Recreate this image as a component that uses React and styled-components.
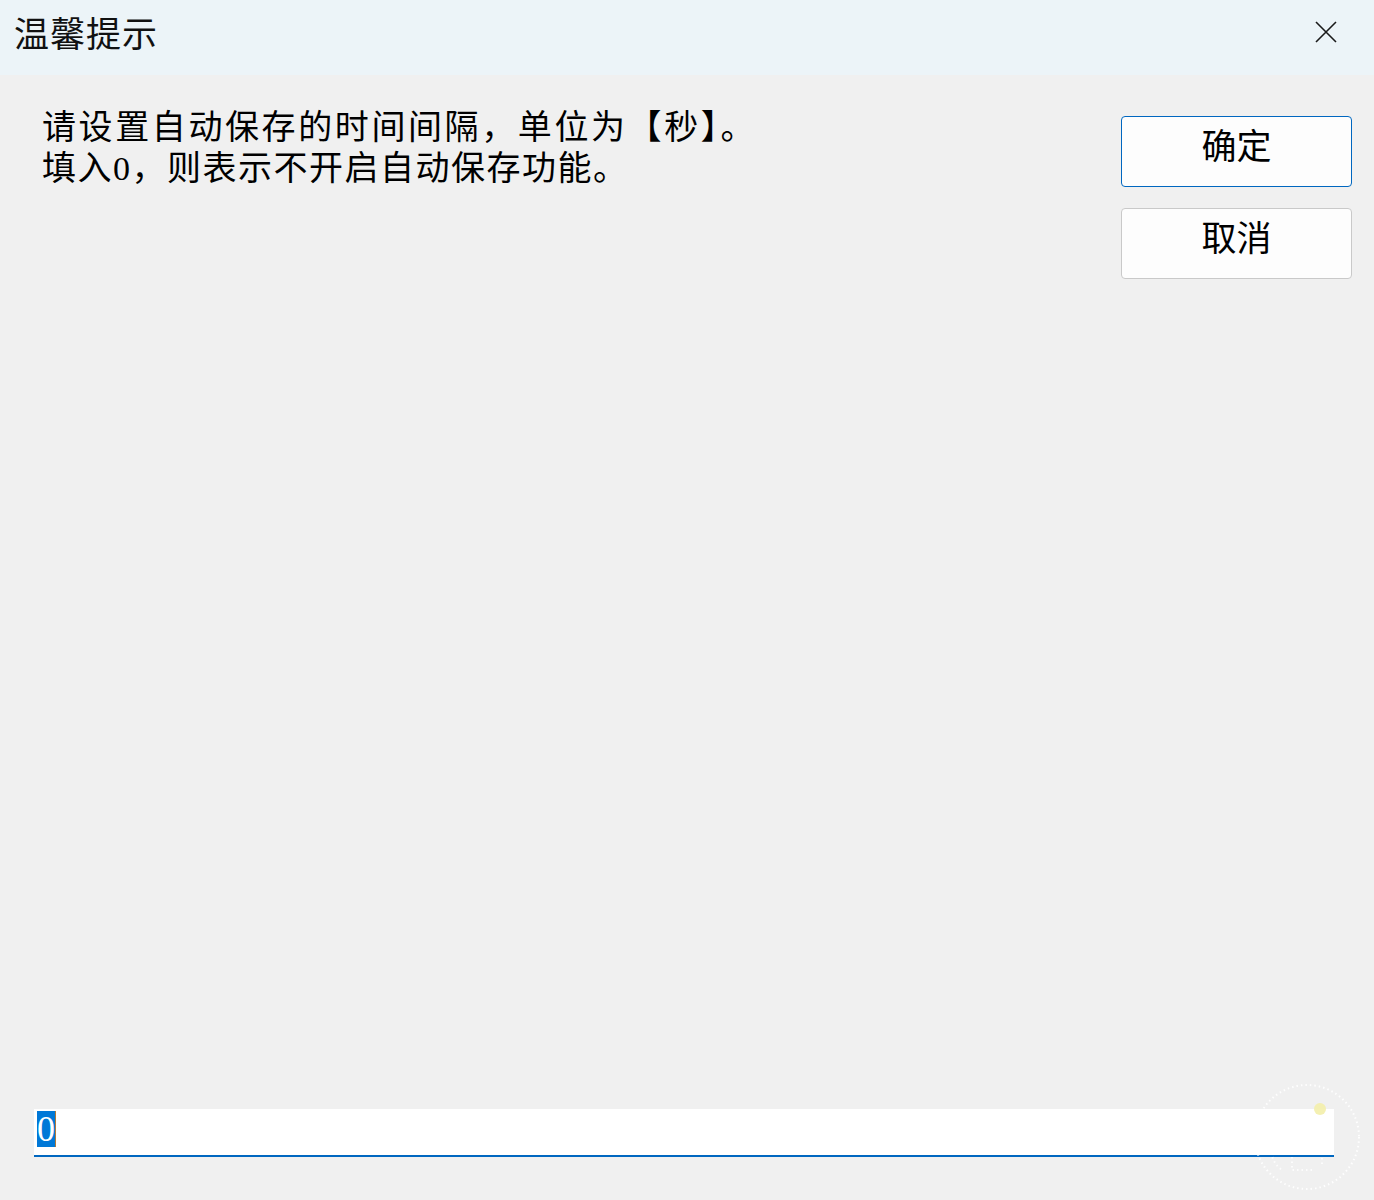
import React from "react";
import styled, { createGlobalStyle } from "styled-components";

const GlobalStyle = createGlobalStyle`
  html, body {
    margin: 0;
    padding: 0;
    background: #f0f0f0;
  }
  * {
    box-sizing: border-box;
  }
`;

const App = () => {
  return (
    <>
      <GlobalStyle />
      <Window>
        <TitleBar>
          <Title>温馨提示</Title>
          <CloseButton aria-label="关闭">
            <svg width="22" height="22" viewBox="0 0 22 22">
              <path
                d="M1 1 L21 21 M21 1 L1 21"
                stroke="#1a1a1a"
                strokeWidth="1.6"
                fill="none"
              />
            </svg>
          </CloseButton>
        </TitleBar>

        <Body>
          <Message>
            <Line spacing={2.6}>请设置自动保存的时间间隔，单位为【秒】。</Line>
            <Line spacing={1.5}>填入0，则表示不开启自动保存功能。</Line>
          </Message>
          <Actions>
            <DialogButton primary>确定</DialogButton>
            <DialogButton>取消</DialogButton>
          </Actions>
        </Body>

        <InputRow>
          <TextBox>
            <Selected>0</Selected>
            <Caret />
          </TextBox>
          <Watermark viewBox="0 0 110 110" width="110" height="110">
            <circle
              cx="55"
              cy="55"
              r="52"
              fill="none"
              stroke="#ffffff"
              strokeWidth="2"
              strokeDasharray="1.5 3"
              opacity="0.9"
            />
            <path
              d="M30 30 H52 M40 30 V88 H60 M22 40 C14 60 18 80 30 88 M70 40 V84 M60 42 H80"
              fill="none"
              stroke="#ffffff"
              strokeWidth="2"
              strokeDasharray="1.5 3"
              opacity="0.8"
            />
            <circle cx="68" cy="27" r="6" fill="#f3eeaa" opacity="0.9" />
          </Watermark>
        </InputRow>
      </Window>
    </>
  );
};

export default App;

const Window = styled.div`
  display: flex;
  flex-direction: column;
  min-height: 100vh;
  background: #f0f0f0;
  font-family: "Liberation Serif", "Noto Sans CJK SC", serif;
  color: #000;
`;

const TitleBar = styled.div`
  display: flex;
  align-items: center;
  justify-content: space-between;
  height: 75px;
  padding: 0 36px 0 14px;
  background: #ecf4f8;
`;

const Title = styled.h1`
  margin: 0;
  margin-top: -12px;
  font-family: "Noto Sans CJK SC", "Noto Sans", sans-serif;
  font-weight: 400;
  font-size: 35px;
  letter-spacing: 1px;
  color: #111;
`;

const CloseButton = styled.button`
  display: flex;
  align-items: center;
  justify-content: center;
  width: 24px;
  height: 24px;
  margin-top: -12px;
  padding: 0;
  border: none;
  background: transparent;
`;

const Body = styled.div`
  display: flex;
  flex: 1;
  justify-content: space-between;
  padding: 41px 22px 0 42px;
`;

const Message = styled.div`
  display: flex;
  flex-direction: column;
  margin-top: -9px;
  font-size: 34px;
  line-height: 41px;
`;

const Line = styled.div`
  white-space: nowrap;
  letter-spacing: ${(p) => p.spacing || 0}px;
`;

const Actions = styled.div`
  display: flex;
  flex-direction: column;
  gap: 21px;
  width: 231px;
`;

const DialogButton = styled.button`
  height: 71px;
  border: 1px solid ${(p) => (p.primary ? "#0067c0" : "#c9c9c9")};
  border-radius: 4px;
  background: #fdfdfd;
  font-family: "Liberation Serif", "Noto Sans CJK SC", serif;
  font-size: 35px;
  color: #000;
  padding: 0 0 16px;
`;

const InputRow = styled.div`
  position: relative;
  padding: 0 40px 43px 34px;
`;

const TextBox = styled.div`
  display: flex;
  align-items: flex-start;
  height: 48px;
  padding: 2px 3px 0;
  background: #ffffff;
  border-bottom: 2px solid #0067c0;
  font-family: "Liberation Serif", serif;
  font-size: 36px;
`;

const Selected = styled.span`
  display: inline-flex;
  align-items: center;
  height: 36px;
  line-height: 36px;
  background: #0078d7;
  color: #ffffff;
`;

const Caret = styled.span`
  width: 1px;
  height: 36px;
  background: #b07a3a;
`;

const Watermark = styled.svg`
  position: absolute;
  right: 12px;
  bottom: 8px;
  pointer-events: none;
`;
